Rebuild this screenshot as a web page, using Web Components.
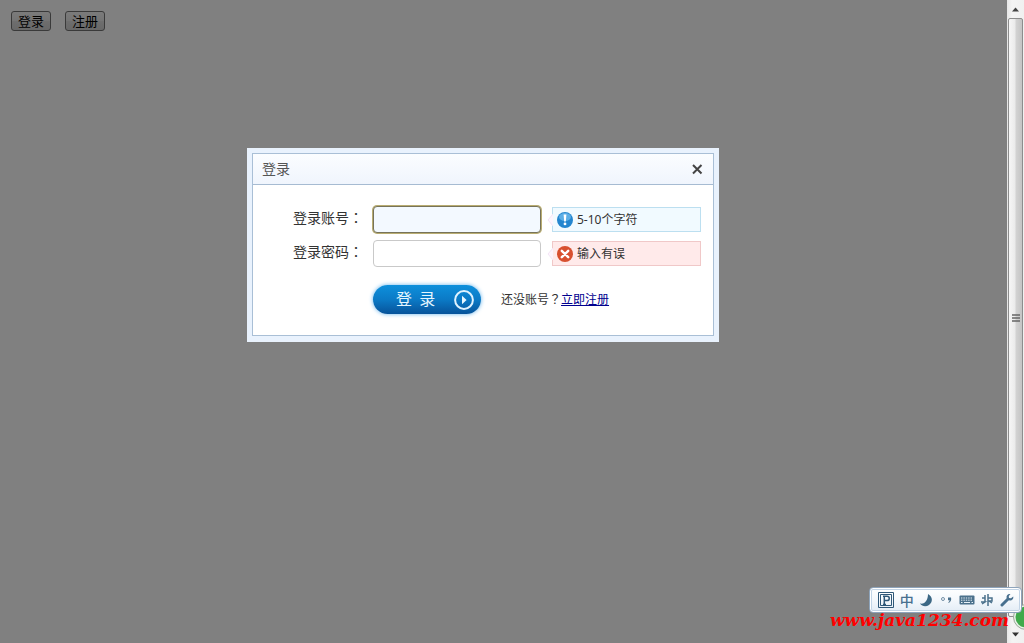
<!DOCTYPE html>
<html lang="zh-CN">
<head>
<meta charset="utf-8">
<title>登录</title>
<style>
html, body { margin: 0; height: 100%; overflow: hidden; }
body { background: #808080; color: #333; font-family: "Noto Sans", "Noto Sans CJK SC", sans-serif; }
</style>
</head>
<body>
<page-shell>
  <tool-bar>
    <plain-button>登录</plain-button>
    <plain-button>注册</plain-button>
  </tool-bar>
  <login-dialog heading="登录">
    <form-field label="登录账号" name="account" active>
      <field-tip kind="info">5-10个字符</field-tip>
    </form-field>
    <form-field label="登录密码" name="password" type="password">
      <field-tip kind="error">输入有误</field-tip>
    </form-field>
    <submit-row></submit-row>
  </login-dialog>
  <scroll-rail slot="rail"></scroll-rail>
  <ime-bar slot="float"></ime-bar>
  <water-mark slot="float">www.java1234.com</water-mark>
</page-shell>
<script>
function define(name, render) {
  customElements.define(name, class extends HTMLElement {
    constructor() {
      super();
      this.attachShadow({ mode: "open" });
    }
    connectedCallback() {
      this.shadowRoot.innerHTML = render(this);
    }
  });
}

define("page-shell", () => `
<style>
:host { display: grid; grid-template-columns: 1fr 17px; height: 100vh; position: relative; }
main { display: flex; flex-direction: column; min-width: 0; }
</style>
<main><slot></slot></main>
<slot name="rail"></slot>
<slot name="float"></slot>`);

define("tool-bar", () => `
<style>:host { display: flex; gap: 14px; padding: 11px; }</style>
<slot></slot>`);

define("plain-button", () => `
<style>
:host { display: block; }
button { display: block; box-sizing: border-box; height: 20px; padding: 0 6px; border: 1px solid #3a3a3a; border-radius: 3px;
  background: linear-gradient(#7b7b7b, #747474 50%, #6e6e6e 51%, #686868); color: #000;
  font: 13px/18px "Noto Sans CJK SC", sans-serif; }
</style>
<button type="button"><slot></slot></button>`);

define("login-dialog", el => `
<style>
:host { display: flex; justify-content: center; padding: 106px 41px 0 0; }
section { box-sizing: border-box; width: 472px; padding: 5px 5px 6px; background: #e9f2fd; }
.panel { border: 1px solid #a9bfd6; background: #fff; }
header { display: flex; align-items: center; justify-content: space-between; height: 30px; padding: 0 10px 0 9px;
  border-bottom: 1px solid #a6bbd2; background: linear-gradient(#fbfdff, #f0f5fd); }
h1 { margin: 0; font: 14px/28px "Noto Sans CJK SC", sans-serif; color: #555; padding-bottom: 2px; }
header button { display: block; width: 12px; height: 12px; padding: 0; border: 0; background: none; }
svg { display: block; }
form { display: grid; gap: 7px; padding: 21px 12px 21px 40px; }
</style>
<section role="dialog" aria-label="${el.getAttribute("heading")}">
  <div class="panel">
    <header>
      <h1>${el.getAttribute("heading")}</h1>
      <button type="button" aria-label="关闭"><svg width="12" height="12" viewBox="0 0 12 12"><path d="M2 2L10.5 10.5M10.5 2L2 10.5" stroke="#444" stroke-width="2"/></svg></button>
    </header>
    <form><slot></slot></form>
  </div>
</section>`);

define("form-field", el => `
<style>
:host { display: grid; grid-template-columns: 80px 168px 160px; align-items: center; height: 27px; }
::slotted(field-tip) { margin-left: 11px; }
label { font: 14px/23px "Noto Sans CJK SC", sans-serif; color: #333; white-space: nowrap; padding-bottom: 4px; }
.mark { font-family: "Noto Sans CJK TC", sans-serif; }
input { box-sizing: border-box; width: 168px; height: 27px; margin: 0; padding: 0 6px; border: 1px solid #c9c9c9; border-radius: 4px; background: #fff; font-size: 14px; outline: 0; }
:host([active]) input { border-color: #77735a; background: #f3f9ff; box-shadow: 0 0 0 1px #b9ad72; }
</style>
<label for="field">${el.getAttribute("label")}<span class="mark" lang="zh-TW">：</span></label>
<input id="field" name="${el.getAttribute("name")}" type="${el.getAttribute("type") || "text"}">
<slot></slot>`);

define("field-tip", el => {
  const error = el.getAttribute("kind") === "error";
  const icon = error
    ? `<circle cx="8" cy="8" r="8" fill="#d8502f"/><path d="M4.8 4.8L11.2 11.2M11.2 4.8L4.8 11.2" stroke="#fff" stroke-width="2.4" stroke-linecap="round"/>`
    : `<circle cx="8" cy="8" r="8" fill="#2486cf"/><ellipse cx="8" cy="5" rx="6" ry="4" fill="#5caee6"/><path d="M6.6 2.6h2.8L8.8 9.4H7.2z" fill="#fff"/><circle cx="8" cy="11.9" r="1.4" fill="#fff"/>`;
  return `
<style>
:host { display: flex; align-items: center; gap: 4px; box-sizing: border-box; height: 25px; padding-left: 4px; position: relative;
  border: 1px solid ${error ? "#f0c8c8" : "#bcdff0"}; background: ${error ? "#ffeaea" : "#f1faff"};
  font-size: 12px; line-height: 23px; color: #333; }
.beak { position: absolute; left: -6px; top: 6px; }
svg { display: block; flex: none; }
</style>
<svg class="beak" width="6" height="12" viewBox="0 0 6 12"><path d="M6 0L1 6L6 12" fill="#fdf5fd" stroke="#f4e4f6"/></svg>
<svg width="16" height="16" viewBox="0 0 16 16">${icon}</svg>
<span><slot></slot></span>`;
});

define("submit-row", () => `
<style>
:host { display: flex; align-items: center; gap: 20px; padding: 11px 0 0 80px; }
button { display: flex; align-items: center; justify-content: space-between; box-sizing: border-box; width: 108px; height: 29px; padding: 0 7px 0 23px; border: 0; border-radius: 15px;
  background: linear-gradient(#0d90dc, #0b7ac6 50%, #07539a); box-shadow: 0 0 4px #62b2ec; color: #e4f6ff;
  font: 16px/26px "Noto Sans CJK SC", sans-serif; white-space: pre; }
button span { padding-bottom: 3px; }
p { margin: 0; font-size: 12px; line-height: 20px; color: #333; }
.mark { font-family: "Noto Sans CJK TC", sans-serif; }
a { color: #00008f; }
</style>
<button type="submit"><span>登  录</span><svg width="20" height="20" viewBox="0 0 20 20"><circle cx="10" cy="10" r="8.9" fill="none" stroke="#dff3ff" stroke-width="2"/><path d="M8 5.8L12.6 10L8 14.2z" fill="#e8f8ff"/></svg></button>
<p>还没账号<span class="mark" lang="zh-TW">？</span><a href="#register">立即注册</a></p>`);

define("scroll-rail", () => `
<style>
:host { display: flex; flex-direction: column; background: linear-gradient(90deg, #e6e6e6, #f4f4f4 30%, #f0f0f0); }
.end { display: grid; place-items: center; height: 18px; }
.thumb { flex: 1; display: grid; place-items: center; margin: 0 1px; border: 1px solid #8d8d8d; border-radius: 2px;
  background: linear-gradient(90deg, #f6f6f6, #ebebeb 45%, #d2d2d2 55%, #c4c4c4); }
.track { height: 8px; }
svg { display: block; }
</style>
<div class="end"><svg width="7" height="5" viewBox="0 0 7 5"><path d="M0 4.5L3.5 .5L7 4.5z" fill="#444"/></svg></div>
<div class="thumb"><svg width="8" height="8" viewBox="0 0 8 8"><path d="M0 1h8M0 4h8M0 7h8" stroke="#666" stroke-width="1.3"/></svg></div>
<div class="track"></div>
<div class="end"><svg width="7" height="5" viewBox="0 0 7 5"><path d="M0 .5L3.5 4.5L7 .5z" fill="#333"/></svg></div>`);

define("ime-bar", () => `
<style>
:host { position: absolute; right: 2px; bottom: 30px; display: block; z-index: 2; }
.bar { display: flex; align-items: center; justify-content: space-between; box-sizing: border-box; width: 153px; height: 26px; padding: 0 7px 0 8px; border: 1px solid #8ea4bb; border-radius: 4px;
  background: linear-gradient(#fff, #f4f8fc 50%, #e3ecf5); box-shadow: inset 0 0 0 1px #fff, inset 0 0 0 2px #c2d4e6; color: #48708f; font: 500 14px/20px "Noto Sans CJK SC", sans-serif; }
svg { display: block; }
.ball { position: absolute; right: -2px; bottom: -17px; z-index: -1; }
</style>
<svg class="ball" width="12" height="26" viewBox="0 0 12 26"><circle cx="14" cy="13" r="12.5" fill="#e8f3e8" stroke="#9aa99a"/><circle cx="14" cy="13" r="10.5" fill="#3faa4b"/></svg>
<div class="bar">
  <svg width="16" height="16" viewBox="0 0 16 16" fill="none" stroke="#2f5878"><path d="M.5 .5h15v15H.5z"/><path d="M2.5 2.5h11v11h-11z"/><path d="M5 12.5h3M6.3 12V4.3M5 4.3h4c3 0 3 4.2 0 4.2H6.5" stroke-width="1.5"/></svg>
  <span>中</span>
  <svg width="14" height="14" viewBox="0 0 14 14"><path d="M9 1C14 4 14 9 10 12C7 14 3 13.5 1 10.5C6 11.5 9 7 9 1z" fill="#3c6885"/></svg>
  <svg width="14" height="12" viewBox="0 0 14 12"><circle cx="4" cy="5" r="1.5" fill="none" stroke="#7490a6"/><path d="M9 3.5h3c.7 2.5-.3 4.5-2.3 5.5l-.4-.8c1-.5 1.3-1.2 1.3-2H9z" fill="#4b718c"/></svg>
  <svg width="16" height="10" viewBox="0 0 16 10"><rect x=".5" y=".5" width="15" height="9" rx="1" fill="#4b718c"/><path d="M2 3h12M2 5.2h12" stroke="#e8f1f8" stroke-dasharray="1.4 1"/><path d="M2 7.5h1.5M5 7.5h6M12.5 7.5H14" stroke="#e8f1f8"/></svg>
  <svg width="14" height="14" viewBox="0 0 14 14" fill="none" stroke="#4b718c" stroke-width="1.5"><path d="M5 2v7M8 1v12M2 5h3M1 9h4L2 11M8 5h4v3H8M9 8l3 2"/></svg>
  <svg width="14" height="14" viewBox="0 0 14 14"><path d="M2 12L8 6" stroke="#48708f" stroke-width="3" stroke-linecap="round"/><path d="M10.5 1C8 .4 6 2.4 6.6 4.8C7 7.2 9.5 8.2 11.5 7.2C13 6.4 13.6 5 13.2 3.4L11 5.2L8.9 4.9L8.8 3z" fill="#48708f"/></svg>
</div>`);

define("water-mark", () => `
<style>
:host { position: absolute; right: 15px; bottom: 13px; z-index: 3; font: italic bold 17px/20px "DejaVu Serif", serif; color: #f00; white-space: nowrap; }
</style>
<slot></slot>`);
</script>
</body>
</html>
